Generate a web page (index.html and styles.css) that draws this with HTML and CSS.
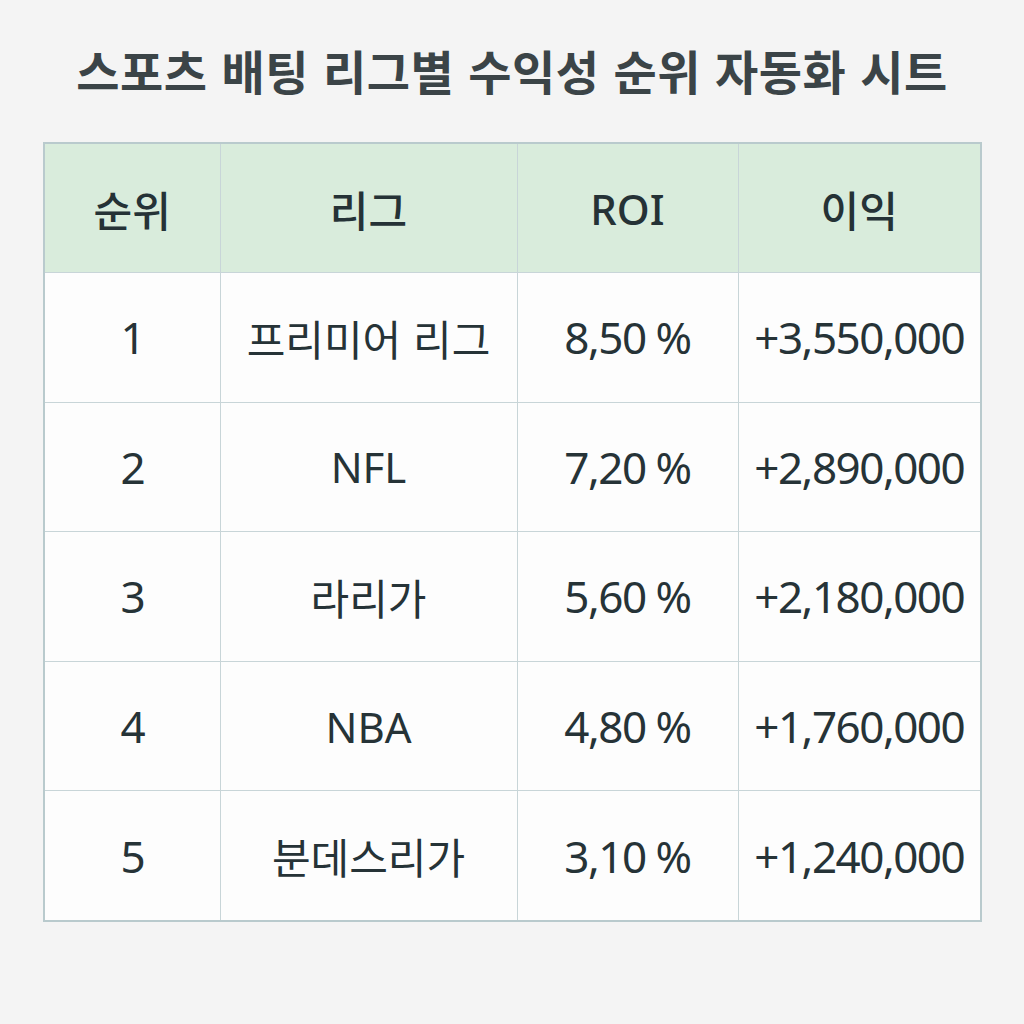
FILE: index.html
```html
<!DOCTYPE html>
<html lang="ko">
<head>
<meta charset="utf-8">
<link rel="stylesheet" href="styles.css">
</head>
<body>
<div class="page">
  <h1 class="title">스포츠 배팅 리그별 수익성 순위 자동화 시트</h1>
  <table class="sheet">
    <colgroup>
      <col class="c1"><col class="c2"><col class="c3"><col class="c4">
    </colgroup>
    <thead>
      <tr><th>순위</th><th>리그</th><th class="latin">ROI</th><th>이익</th></tr>
    </thead>
    <tbody>
      <tr><td class="num">1</td><td>프리미어 리그</td><td class="num">8,50 %</td><td class="num">+3,550,000</td></tr>
      <tr><td class="num">2</td><td class="latin">NFL</td><td class="num">7,20 %</td><td class="num">+2,890,000</td></tr>
      <tr><td class="num">3</td><td>라리가</td><td class="num">5,60 %</td><td class="num">+2,180,000</td></tr>
      <tr><td class="num">4</td><td class="latin">NBA</td><td class="num">4,80 %</td><td class="num">+1,760,000</td></tr>
      <tr><td class="num">5</td><td>분데스리가</td><td class="num">3,10 %</td><td class="num">+1,240,000</td></tr>
    </tbody>
  </table>
</div>
</body>
</html>
```
FILE: styles.css
```css
html, body {
  margin: 0;
  padding: 0;
  background: #f4f4f4;
}
.page {
  width: 1024px;
  height: 1024px;
  box-sizing: border-box;
  padding-top: 36px;
  font-family: "Noto Sans CJK KR", "Noto Sans", sans-serif;
  color: #2b383c;
}
.title {
  margin: 0 0 38px 0;
  height: 68px;
  line-height: 68px;
  text-align: center;
  font-size: 47px;
  font-weight: 700;
  color: #3b4447;
  letter-spacing: 0.6px;
}
.sheet {
  margin-left: 43px;
  width: 937px;
  border-collapse: collapse;
  table-layout: fixed;
  background: #fdfdfd;
  border: 2px solid #b9cacd;
}
.c1 { width: 176px; }
.c2 { width: 297px; }
.c3 { width: 221px; }
.c4 { width: 243px; }
th, td {
  border: 1.5px solid #c8d5d8;
  text-align: center;
  vertical-align: middle;
  padding: 0;
}
thead th {
  background: #d9ecdc;
  height: 128px;
  font-size: 42px;
  font-weight: 500;
  color: #253236;
}
tbody td {
  height: 128.6px;
  font-size: 42px;
  font-weight: 400;
  color: #263337;
}
.num {
  font-family: "Noto Sans", sans-serif;
  font-size: 44px;
  letter-spacing: -1.5px;
}
.latin {
  font-family: "Noto Sans", sans-serif;
  font-size: 42px;
}
```
